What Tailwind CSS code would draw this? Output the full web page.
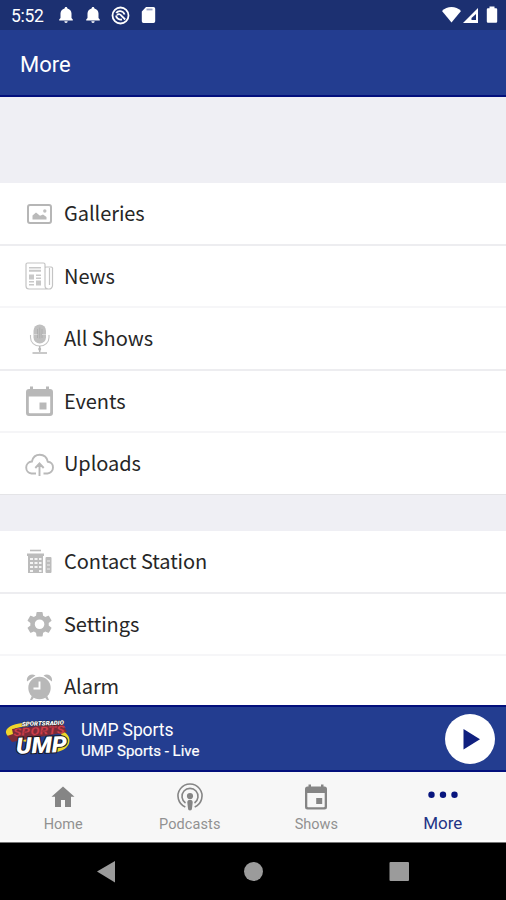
<!DOCTYPE html>
<html lang="en">
<head>
<meta charset="utf-8">
<title>More</title>
<script src="https://cdn.jsdelivr.net/npm/@tailwindcss/browser@4"></script>
</head>
<body class="w-[506px] h-[900px] overflow-hidden bg-[#efeff4] font-['Roboto',sans-serif] flex flex-col">
<header class="shrink-0">
  <div class="h-[30px] bg-[#1c3071] flex items-center text-white pl-[11px] pr-[8px]">
    <span class="text-[17.5px] leading-[30px] w-[34px] whitespace-nowrap mt-[2px] tracking-[-0.3px]">5:52</span>
    <svg class="ml-[14px]" width="14" height="18" viewBox="0 0 14 18" fill="currentColor"><path d="M7 1c.9 0 1.400.6 1.400 1.500C10.800 3.100 12.500 5 12.500 7.500V12l1.300 1.600v.9H.2v-.9L1.500 12V7.500C1.500 5 3.200 3.100 5.600 2.500 5.600 1.600 6.100 1 7 1zM5.300 15.300h3.400a1.700 1.700 0 0 1-3.400 0z"/></svg>
    <svg class="ml-[13px]" width="14" height="18" viewBox="0 0 14 18" fill="currentColor"><path d="M7 1c.9 0 1.400.6 1.400 1.500C10.800 3.100 12.500 5 12.500 7.500V12l1.300 1.600v.9H.2v-.9L1.500 12V7.500C1.500 5 3.200 3.100 5.600 2.500 5.600 1.600 6.100 1 7 1zM5.300 15.300h3.400a1.700 1.700 0 0 1-3.400 0z"/></svg>
    <svg class="ml-[11px]" width="19" height="19" viewBox="0 0 19 19" fill="none" stroke="currentColor"><circle cx="9.500" cy="9.500" r="8" stroke-width="1.800"/><path d="M5.200 7C7 4.200 12 4.200 13.600 8.500M5 9.500c.4 2.800 3 4.600 6 4M6 9c2-1.700 3.500-.6 4.600.9l3.600 3.600" stroke-width="1.800"/></svg>
    <svg class="ml-[11px]" width="15" height="18" viewBox="0 0 15 18"><path d="M5 1h7.500A1.700 1.700 0 0 1 14.200 2.700v12.600a1.700 1.700 0 0 1-1.700 1.700h-10A1.700 1.700 0 0 1 .8 15.300V5.500z" fill="#fff"/><path d="M5.500 3.500h6" stroke="#9aa3c4" stroke-width="1.800"/></svg>
    <svg class="ml-auto" width="19" height="18" viewBox="0 0 19 18" fill="currentColor"><path d="M0 5C5-.2 14-.2 19 5L9.500 16.500z"/></svg>
    <svg class="ml-[1px]" width="17" height="17" viewBox="0 0 17 17"><path d="M16 1v15H1z" fill="#fff"/><path d="M14 7v6H9.500v-2z" fill="#1c3071"/></svg>
    <svg class="ml-[7px]" width="12" height="18" viewBox="0 0 12 18" fill="currentColor"><path d="M3.500.500h5v1.700H10A1.200 1.200 0 0 1 11.200 3.500v12A1.200 1.200 0 0 1 10 16.700H2A1.200 1.200 0 0 1 .8 15.500V3.500A1.200 1.200 0 0 1 2 2.200h1.500z"/></svg>
  </div>
  <div class="h-[67px] bg-[#233d90] border-b-2 border-[#03107c] pl-[20px] pt-[4px] flex items-center text-white text-[22px]">More</div>
</header>
<main class="flex-1 min-h-0 overflow-hidden pt-[86px] text-[20px] tracking-[-0.06px] text-[#262626] font-['Noto_Sans_CJK_SC',sans-serif] [&_span]:-mt-px">
  <section class="bg-white">
    <div class="h-[63px] border-b-2 border-[#ededf0] flex items-center pl-[24px] gap-[9px]">
      <svg width="31" height="32" viewBox="0 0 31 32" fill="none"><rect x="4" y="7" width="23" height="18" rx="2" stroke="#b6b6b6" stroke-width="2"/><path d="M8.500 21.500v-4l3.500-3 4 3.300 3-1.300 3.500 2.500v2.500z" fill="#bababa"/><circle cx="20.800" cy="13" r="1.700" fill="#c0c0c0"/></svg>
      <span>Galleries</span>
    </div>
    <div class="h-[62px] border-b-2 border-[#f6f6f8] flex items-center pl-[24px] gap-[9px]">
      <svg width="31" height="32" viewBox="0 0 31 32" fill="none" stroke="#c4c4c4" stroke-width="1.200"><path d="M21 8V4.500A1.500 1.500 0 0 0 19.500 3H3.500A1.500 1.500 0 0 0 2 4.500V26a3 3 0 0 0 3 3h20a3.500 3.500 0 0 0 3.500-3.500V9A1.500 1.500 0 0 0 27 7h-4.500A1.500 1.500 0 0 0 21 8.500v17c0 2 1 3.300 2.800 3.300M25.500 8v17"/><g fill="#c8c8c8" stroke="none"><path d="M5 7h12v1.500H5zM5 9.700h12v2H5zM5 14.500h5v5H5zM12 14.500h5V16h-5zM12 17.500h5V19h-5zM5 21h5v1.500H5zM5 24h5v1.500H5zM12 20.500h5v5h-5z"/></g></svg>
      <span>News</span>
    </div>
    <div class="h-[63px] border-b-2 border-[#ededf0] flex items-center pl-[24px] gap-[9px]">
      <svg width="31" height="32" viewBox="0 0 31 32" fill="none"><rect x="9.500" y="1.500" width="12.500" height="19" rx="6.200" fill="#c0c0c0"/><path d="M13.500 6v9M15.800 4.500v11M18 6v9" stroke="#adadad" stroke-width=".9"/><path d="M9.500 11.500h4M18 11.500h4" stroke="#e0e0e0" stroke-width=".8"/><path d="M6.500 12v2.500c0 5 4 8.500 9.200 8.500s9.300-3.500 9.300-8.500V12" stroke="#c4c4c4" stroke-width="1.100"/><path d="M15.700 23v6M8.500 30h14.500" stroke="#b8b8b8" stroke-width="1.500"/><circle cx="15.700" cy="26" r="1.500" fill="#b8b8b8"/></svg>
      <span>All Shows</span>
    </div>
    <div class="h-[62px] border-b-2 border-[#f5f5f7] flex items-center pl-[24px] gap-[9px]">
      <svg width="31" height="32" viewBox="0 0 31 32"><path fill="#b8b8b8" fill-rule="evenodd" d="M6 1.500h3V4h13V1.500h3V4h1a3 3 0 0 1 3 3v21a3 3 0 0 1-3 3H5a3 3 0 0 1-3-3V7a3 3 0 0 1 3-3h1zM4.800 11.500v15.700a1 1 0 0 0 1 1h19.400a1 1 0 0 0 1-1V11.500z"/><path d="M15.500 17.500h7v7h-7z" fill="#b8b8b8"/></svg>
      <span>Events</span>
    </div>
    <div class="h-[62px] border-b border-[#e4e4e7] flex items-center pl-[24px] gap-[9px]">
      <svg width="31" height="32" viewBox="0 0 31 32" fill="none" stroke="#b9b9b9" stroke-width="1.900"><path d="M12 25.500H7.500a6 6 0 0 1-5.300-6c0-3.400 2.500-5.800 5.700-6 1-4.200 4-6.700 7.900-6.700 4.300 0 7.100 2.700 8 6.900 3 .2 5.200 2.500 5.200 5.700 0 3.400-2.500 6-5.500 6.100H19.500M15.500 28V16M11.300 20l4.200-4.500 4.200 4.500"/></svg>
      <span>Uploads</span>
    </div>
  </section>
  <section class="bg-white mt-[36px]">
    <div class="h-[63px] border-b-2 border-[#ededf0] flex items-center pl-[24px] gap-[9px]">
      <svg width="31" height="32" viewBox="0 0 31 32" fill="none"><path d="M6 4.500h11" stroke="#bcbcbc" stroke-width="1.600"/><path d="M3 7.500h17v2.500h-1V27H4V10H3z" fill="#bcbcbc"/><path d="M6 13h3M10.500 13h3M15 13h2.500M6 17h3M10.500 17h3M15 17h2.500M6 21h3M10.500 21h3M15 21h2.500M6 25h3M15 25h2.500" stroke="#f4f4f4" stroke-width="1.900"/><rect x="21.500" y="11" width="6" height="16" rx="1" fill="#bcbcbc"/><path d="M23 15h3M23 19h3M23 23h3" stroke="#eee" stroke-width="1.200"/></svg>
      <span>Contact Station</span>
    </div>
    <div class="h-[62px] border-b-2 border-[#f6f6f8] flex items-center pl-[24px] gap-[9px]">
      <svg width="31" height="32" viewBox="0 0 31 32"><path transform="translate(.8 1.500) scale(1.230)" fill="#b8b8b8" d="M19.430 12.980c.04-.32.070-.64.070-.98s-.03-.66-.07-.98l2.110-1.650c.19-.15.24-.42.120-.64l-2-3.460c-.12-.22-.39-.3-.61-.22l-2.490 1c-.52-.4-1.080-.73-1.690-.98l-.38-2.650C14.460 2.180 14.250 2 14 2h-4c-.25 0-.46.18-.49.42l-.38 2.650c-.61.25-1.170.59-1.690.98l-2.490-1c-.23-.09-.49 0-.61.22l-2 3.460c-.13.22-.07.49.120.64l2.110 1.650c-.04.32-.07.65-.07.98s.03.66.070.98l-2.110 1.650c-.19.15-.24.42-.12.64l2 3.460c.12.22.39.3.61.22l2.490-1c.52.4 1.080.73 1.690.98l.38 2.650c.03.24.24.42.49.42h4c.25 0 .46-.18.49-.42l.38-2.650c.61-.25 1.170-.59 1.690-.98l2.490 1c.23.09.49 0 .61-.22l2-3.460c.12-.22.070-.49-.12-.64l-2.110-1.650zM12 15.900a3.900 3.900 0 1 1 0-7.800 3.900 3.900 0 0 1 0 7.800z"/></svg>
      <span>Settings</span>
    </div>
    <div class="h-[61px] flex items-center pl-[24px] gap-[9px]">
      <svg width="31" height="32" viewBox="0 0 31 32" fill="#b8b8b8"><circle cx="15.500" cy="17" r="11.200"/><path d="M3 10.500C2 5 7 1.500 11.500 4.500zM28 10.500C29 5 24 1.500 19.500 4.500zM8 24.500l2 2-2 2.500H6zM23 24.500l-2 2 2 2.500h2z"/><path d="M15.500 10.500v7h-6" fill="none" stroke="#fff" stroke-width="1.900"/></svg>
      <span>Alarm</span>
    </div>
  </section>
</main>
<footer class="shrink-0">
  <div class="h-[67px] bg-[#233d90] border-y-2 border-[#03107c] flex items-center pl-[5px] pr-[11px] text-white">
    <svg class="overflow-visible" width="67" height="36" viewBox="0 0 67 36" font-family="Roboto, sans-serif" font-style="italic" font-weight="900"><path d="M18 2C7 3 0 7 1 12c1 5 11 8 22 9l1-6C15 14 8 13 8 10s7-4 16-5z" fill="#efd52c"/><path d="M58 10c11 6 9 21-13 22l3-6c9-2 12-6 8-13z" fill="#efd52c"/><path d="M7 8l50-6 5 9-55 10-5-6 6-2z" fill="#792b38"/><text x="8" y="14" font-size="11" textLength="52" lengthAdjust="spacingAndGlyphs" fill="#d23e4b" stroke="#792b38" stroke-width=".3" transform="rotate(-3 30 12)">SPORTS</text><text x="17" y="4.500" font-size="6" textLength="42" lengthAdjust="spacingAndGlyphs" fill="#fff" stroke="#222" stroke-width=".8" paint-order="stroke" transform="rotate(-2 35 5)">SPORTSRADIO</text><text x="11" y="32" font-size="22.500" textLength="51" lengthAdjust="spacingAndGlyphs" fill="#fff" stroke="#15151c" stroke-width="2" paint-order="stroke" transform="rotate(-2 34 25)">UMP</text></svg>
    <div class="ml-[9px] flex flex-col whitespace-nowrap pt-[2px]">
      <span class="text-[17.500px] tracking-[-0.1px] leading-[22px]">UMP Sports</span>
      <span class="text-[15px] leading-[20px] [-webkit-text-stroke:0.2px_white]">UMP Sports - Live</span>
    </div>
    <div class="ml-auto size-[50px] rounded-full bg-white flex items-center justify-center">
      <svg width="50" height="50" viewBox="0 0 50 50"><path d="M18.500 15v20.500L35 25.200z" fill="#10207f"/></svg>
    </div>
  </div>
  <nav class="h-[70px] bg-[#f7f7f7] border-b-2 border-white grid grid-cols-4 text-[#919191] text-[14.500px] text-center">
    <div class="flex flex-col items-center pt-[10px]">
      <svg width="30" height="30" viewBox="0 0 30 30" fill="#858585"><path d="M15 4.500l11.500 10.200H23V25h-6v-7h-4v7H7V14.700H3.500z"/></svg>
      <span class="leading-[26px]">Home</span>
    </div>
    <div class="flex flex-col items-center pt-[10px]">
      <svg width="30" height="30" viewBox="0 0 30 30" fill="none" stroke="#858585" stroke-width="1.600"><path d="M10.300 25A12 12 0 1 1 19.700 25M10.500 21a8 8 0 1 1 9 0"/><circle cx="15" cy="14" r="3.100" fill="#858585" stroke="none"/><path d="M12.300 20.500a2.700 2.700 0 0 1 5.400 0L17 26.500a2 2 0 0 1-4 0z" fill="#858585" stroke="none"/></svg>
      <span class="leading-[26px] tracking-[0.1px]">Podcasts</span>
    </div>
    <div class="flex flex-col items-center pt-[10px]">
      <svg width="30" height="30" viewBox="0 0 30 30"><path fill="#858585" fill-rule="evenodd" d="M7.500 2.500H10v2h10v-2h2.500v2h1A2.500 2.500 0 0 1 26 7v18a2.500 2.500 0 0 1-2.500 2.500h-17A2.500 2.500 0 0 1 4 25V7a2.500 2.500 0 0 1 2.500-2.500h1zM6.300 11v13.500a.8.8 0 0 0 .8.8h15.800a.8.8 0 0 0 .8-.8V11z"/><path d="M15.200 16h6v6h-6z" fill="#858585"/></svg>
      <span class="leading-[26px]">Shows</span>
    </div>
    <div class="flex flex-col items-center pt-[10px] text-[#233486]">
      <svg width="30" height="30" viewBox="0 0 30 30" fill="#08157e"><circle cx="3.500" cy="12.800" r="3.200"/><circle cx="15" cy="12.800" r="3.200"/><circle cx="26.500" cy="12.800" r="3.200"/></svg>
      <span class="text-[17px] leading-[22px]">More</span>
    </div>
  </nav>
  <div class="h-[58px] bg-black border-t border-[#777]">
    <svg width="506" height="57" viewBox="0 0 506 57" fill="#9b9b9b"><path d="M115 18v21.500L97 28.500z"/><circle cx="253.500" cy="28.500" r="9.500"/><rect x="389.500" y="19" width="19.500" height="19" rx="1"/></svg>
  </div>
</footer>
</body>
</html>
